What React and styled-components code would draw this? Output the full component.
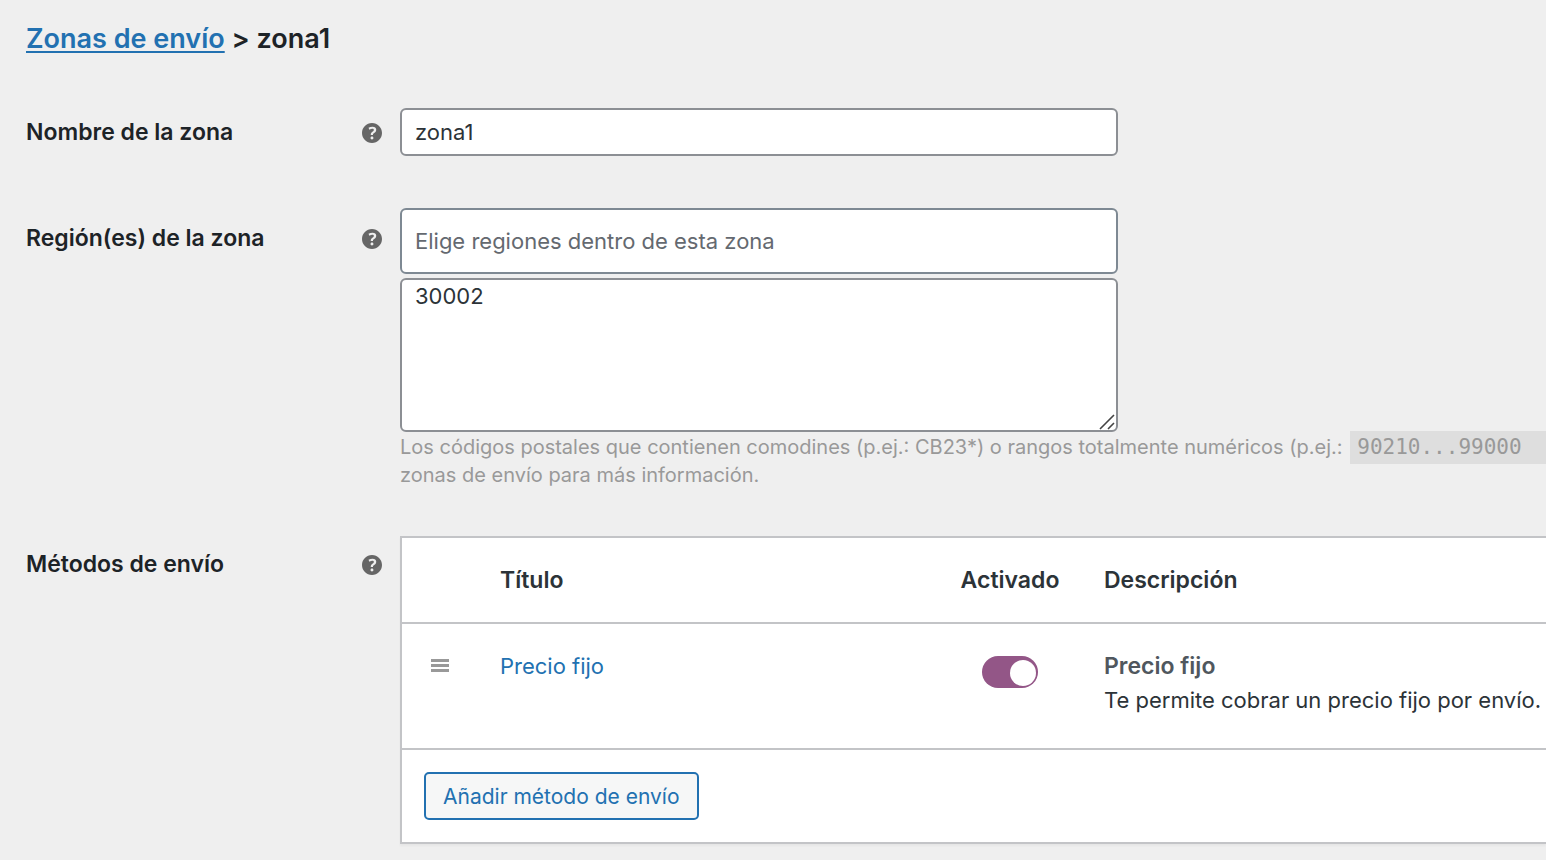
import React, { useState } from "react";
import styled, { createGlobalStyle } from "styled-components";

const GlobalStyle = createGlobalStyle`
  * {
    box-sizing: border-box;
  }
  body {
    margin: 0;
    background: #efefef;
    color: #2c3338;
    font-family: Inter, "Liberation Sans", sans-serif;
    font-size: 22px;
    line-height: 28px;
    overflow-x: hidden;
  }
`;

const Page = styled.main`
  padding: 20px 0 16px 26px;
  overflow: hidden;
`;

const Title = styled.h1`
  margin: 0 0 50px;
  font-size: 27px;
  line-height: 38px;
  font-weight: 600;
  color: #1d2327;
`;

const TitleLink = styled.a`
  color: #2271b1;
  text-decoration: underline;
  text-decoration-thickness: 2px;
  text-underline-offset: 3px;
  text-decoration-skip-ink: none;
`;

const Row = styled.div`
  display: grid;
  grid-template-columns: 356px minmax(0, 1fr);
  column-gap: 18px;
  margin-bottom: ${(props) => props.$gap || 0}px;
`;

const RowHead = styled.div`
  display: flex;
  justify-content: space-between;
  align-items: flex-start;
  padding-top: ${(props) => props.$top}px;
`;

const labelText = `
  font-size: 23px;
  font-weight: 600;
  color: #1d2327;
`;

const Label = styled.label`
  ${labelText}
`;

const Caption = styled.span`
  ${labelText}
`;

const HelpIcon = styled.svg`
  flex: none;
  width: 20px;
  height: 20px;
  margin-top: 5px;
  fill: #666;
`;

const TextField = styled.input`
  display: block;
  width: 100%;
  max-width: 718px;
  height: ${(props) => props.$height}px;
  padding: 0 13px;
  border: 2px solid ${(props) => props.$border || "#8c8f94"};
  border-radius: 6px;
  background: #fff;
  color: #2c3338;
  font: inherit;
  &::placeholder {
    color: #646970;
    opacity: 1;
  }
`;

const AreaWrapper = styled.div`
  position: relative;
  max-width: 718px;
  margin-top: 4px;
`;

const TextArea = styled.textarea`
  display: block;
  width: 100%;
  height: 154px;
  padding: 2px 13px;
  border: 2px solid #8c8f94;
  border-radius: 6px;
  background: #fff;
  color: #2c3338;
  font: inherit;
  resize: none;
`;

const Grip = styled.svg`
  position: absolute;
  right: 3px;
  bottom: 2px;
  width: 16px;
  height: 16px;
  stroke: #444;
  stroke-width: 1.6;
  pointer-events: none;
`;

const HelpText = styled.p`
  margin: 1px 0 0;
  font-size: 20px;
  line-height: 28px;
  color: #999;
  white-space: nowrap;
`;

const Code = styled.code`
  margin: 0 2px;
  padding: 4px 24px 5px 7px;
  background: #dedede;
  font-family: "DejaVu Sans Mono", monospace;
  font-size: 21px;
  line-height: 24px;
`;

const MethodsTable = styled.table`
  width: 100%;
  table-layout: fixed;
  border-spacing: 0;
  border: 2px solid #c3c4c7;
  border-right: none;
  background: #fff;
  box-shadow: 0 2px 2px rgba(0, 0, 0, 0.04);
`;

const Col = styled.col`
  width: ${(props) => props.$width}px;
`;

const HeadCell = styled.th`
  height: 86px;
  padding: 0 20px;
  border-bottom: 2px solid #c3c4c7;
  font-size: 23px;
  font-weight: 600;
  text-align: ${(props) => props.$align || "left"};
`;

const Cell = styled.td`
  height: 126px;
  padding: 25px 20px 0;
  border-bottom: 2px solid #c3c4c7;
  line-height: 34px;
  vertical-align: top;
  text-align: ${(props) => props.$align || "left"};
  white-space: nowrap;
`;

const FootCell = styled.td`
  padding: 22px;
`;

const SortHandle = styled.svg`
  display: block;
  width: 18px;
  height: 14px;
  margin: 9px 0 0 9px;
  fill: #999;
`;

const MethodLink = styled.a`
  color: #2271b1;
  text-decoration: none;
`;

const MethodName = styled.strong`
  display: block;
  font-size: 23px;
  font-weight: 600;
  color: #50575e;
`;

const Toggle = styled.input`
  appearance: none;
  display: block;
  width: 56px;
  height: 32px;
  margin: 7px auto 0;
  padding: 4px 2px 2px;
  border-radius: 16px;
  background: ${(props) => (props.checked ? "#935687" : "#999")};
  cursor: pointer;
  &::before {
    content: "";
    display: block;
    width: 26px;
    height: 26px;
    margin-left: ${(props) => (props.checked ? "auto" : "0")};
    border-radius: 50%;
    background: #fff;
  }
`;

const Button = styled.button`
  display: block;
  height: 48px;
  padding: 0 17px;
  border: 2px solid #2271b1;
  border-radius: 5px;
  background: #f6f7f7;
  color: #2271b1;
  font-family: inherit;
  font-size: 21px;
  white-space: nowrap;
  cursor: pointer;
`;

const Help = () => (
  <HelpIcon viewBox="3 3 14 14" role="img" aria-label="Ayuda">
    <path d="M17 10c0-3.87-3.14-7-7-7-3.87 0-7 3.13-7 7s3.13 7 7 7c3.86 0 7-3.13 7-7zm-6.3 1.48H9.14v-.43c0-.38.08-.7.24-.98s.46-.57.88-.89c.41-.29.68-.53.81-.71.14-.18.2-.39.2-.62 0-.25-.09-.44-.28-.58-.19-.13-.45-.19-.79-.19-.58 0-1.25.19-2 .57l-.64-1.28c.87-.49 1.8-.74 2.77-.74.81 0 1.45.2 1.92.58.48.39.71.91.71 1.55 0 .43-.09.8-.29 1.11-.19.32-.57.67-1.11 1.06-.38.28-.61.49-.71.63-.1.15-.15.34-.15.57v.35zm-1.47 2.74c-.18-.17-.27-.42-.27-.73 0-.33.08-.58.26-.75s.43-.25.77-.25c.32 0 .57.09.75.26s.27.42.27.74c0 .3-.09.55-.27.72-.18.18-.43.27-.75.27-.33 0-.58-.09-.76-.26z" />
  </HelpIcon>
);

const App = () => {
  const [name, setName] = useState("zona1");
  const [regions, setRegions] = useState("");
  const [postcodes, setPostcodes] = useState("30002");
  const [enabled, setEnabled] = useState(true);

  return (
    <>
      <GlobalStyle />
      <Page>
        <Title>
          <TitleLink href="#zonas">Zonas de envío</TitleLink> &gt; zona1
        </Title>

        <Row $gap={52}>
          <RowHead $top={10}>
            <Label htmlFor="zone-name">Nombre de la zona</Label>
            <Help />
          </RowHead>
          <TextField
            id="zone-name"
            $height={48}
            value={name}
            onChange={(e) => setName(e.target.value)}
          />
        </Row>

        <Row $gap={47}>
          <RowHead $top={16}>
            <Label htmlFor="zone-regions">Región(es) de la zona</Label>
            <Help />
          </RowHead>
          <div>
            <TextField
              id="zone-regions"
              $height={66}
              $border="#7e8993"
              value={regions}
              onChange={(e) => setRegions(e.target.value)}
              placeholder="Elige regiones dentro de esta zona"
            />
            <AreaWrapper>
              <TextArea
                aria-label="Códigos postales"
                value={postcodes}
                onChange={(e) => setPostcodes(e.target.value)}
              />
              <Grip viewBox="0 0 16 16" aria-hidden="true">
                <path d="M1 15L15 1M9 15l6-6" />
              </Grip>
            </AreaWrapper>
            <HelpText>
              Los códigos postales que contienen comodines (p.ej.: CB23*) o rangos totalmente numéricos (p.ej.:{" "}
              <Code>90210...99000</Code>
              <br />
              zonas de envío para más información.
            </HelpText>
          </div>
        </Row>

        <Row>
          <RowHead $top={14}>
            <Caption>Métodos de envío</Caption>
            <Help />
          </RowHead>
          <MethodsTable>
            <colgroup>
              <Col $width={78} />
              <Col $width={456} />
              <Col $width={148} />
              <col />
            </colgroup>
            <thead>
              <tr>
                <HeadCell />
                <HeadCell>Título</HeadCell>
                <HeadCell $align="center">Activado</HeadCell>
                <HeadCell>Descripción</HeadCell>
              </tr>
            </thead>
            <tbody>
              <tr>
                <Cell>
                  <SortHandle viewBox="0 0 18 14" aria-hidden="true">
                    <path d="M0 1h18v3H0zM0 6h18v3H0zM0 11h18v3H0z" />
                  </SortHandle>
                </Cell>
                <Cell>
                  <MethodLink href="#precio-fijo">Precio fijo</MethodLink>
                </Cell>
                <Cell $align="center">
                  <Toggle
                    type="checkbox"
                    role="switch"
                    aria-label="Activado"
                    checked={enabled}
                    onChange={() => setEnabled(!enabled)}
                  />
                </Cell>
                <Cell>
                  <MethodName>Precio fijo</MethodName>
                  Te permite cobrar un precio fijo por envío.
                </Cell>
              </tr>
            </tbody>
            <tfoot>
              <tr>
                <FootCell colSpan={4}>
                  <Button type="button">Añadir método de envío</Button>
                </FootCell>
              </tr>
            </tfoot>
          </MethodsTable>
        </Row>
      </Page>
    </>
  );
};

export default App;
